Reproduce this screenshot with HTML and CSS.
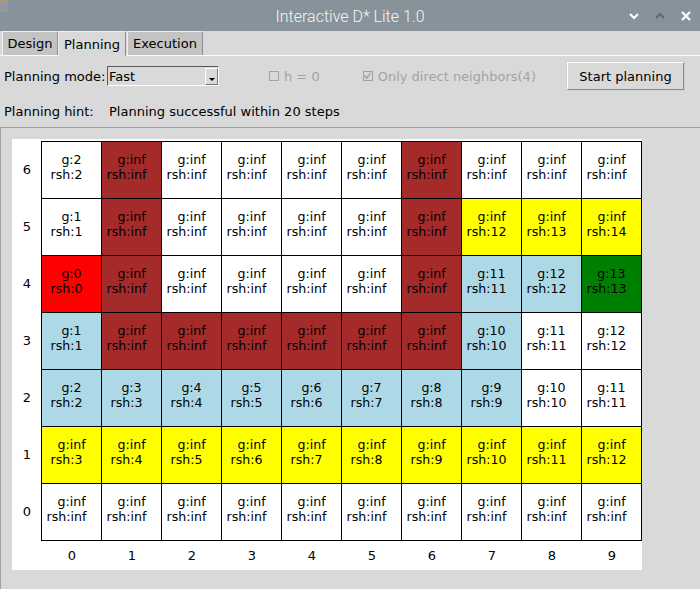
FILE: index.html
```html
<!DOCTYPE html>
<html>
<head>
<meta charset="utf-8">
<link rel="stylesheet" href="styles.css">
</head>
<body>
<div class="window">
  <div class="titlebar">
    <div class="tb-left"><span class="appicon"></span></div>
    <div class="tb-title">Interactive D* Lite 1.0</div>
    <div class="tb-right">
      <svg class="wbtn" width="12" height="8" viewBox="0 0 12 8"><path d="M2 2 L6 6 L10 2" fill="none" stroke="#ffffff" stroke-width="2.2"/></svg>
      <svg class="wbtn dim" width="12" height="8" viewBox="0 0 12 8"><path d="M2 6 L6 2 L10 6" fill="none" stroke="#5e686f" stroke-width="2.2"/></svg>
      <svg class="wbtn" width="12" height="12" viewBox="0 0 12 12"><path d="M2 2 L10 10 M10 2 L2 10" fill="none" stroke="#ffffff" stroke-width="2.4"/></svg>
    </div>
  </div>

  <div class="tabs">
    <div class="tab t-design">Design</div>
    <div class="tab t-planning active">Planning</div>
    <div class="tab t-exec">Execution</div>
  </div>

  <div class="pane">
    <div class="controls">
      <span class="label">Planning mode:</span>
      <div class="combo"><span class="combo-text">Fast</span><span class="combo-arrow"><span class="tri"></span></span></div>
      <label class="check c1"><span class="box"></span><span class="ctext">h = 0</span></label>
      <label class="check c2"><span class="box checked"><svg width="10" height="10" viewBox="0 0 10 10"><path d="M1.5 4.5 L4 7.5 L8.5 1.5" fill="none" stroke="#a3a3a3" stroke-width="1.6"/></svg></span><span class="ctext">Only direct neighbors(4)</span></label>
      <button class="btn">Start planning</button>
    </div>
    <div class="hint">
      <span class="hint-label">Planning hint:</span>
      <span class="hint-text">Planning successful within 20 steps</span>
    </div>
    <div class="frame">
      <div class="figure">
        <div class="plot">
          <div class="ylabels">
            <span>6</span><span>5</span><span>4</span><span>3</span><span>2</span><span>1</span><span>0</span>
          </div>
          <div class="grid">
            <!-- row 6 -->
            <div class="cell w"><span class="g">g:2</span><span class="r">rsh:2</span></div>
            <div class="cell b"><span class="g">g:inf</span><span class="r">rsh:inf</span></div>
            <div class="cell w"><span class="g">g:inf</span><span class="r">rsh:inf</span></div>
            <div class="cell w"><span class="g">g:inf</span><span class="r">rsh:inf</span></div>
            <div class="cell w"><span class="g">g:inf</span><span class="r">rsh:inf</span></div>
            <div class="cell w"><span class="g">g:inf</span><span class="r">rsh:inf</span></div>
            <div class="cell b"><span class="g">g:inf</span><span class="r">rsh:inf</span></div>
            <div class="cell w"><span class="g">g:inf</span><span class="r">rsh:inf</span></div>
            <div class="cell w"><span class="g">g:inf</span><span class="r">rsh:inf</span></div>
            <div class="cell w"><span class="g">g:inf</span><span class="r">rsh:inf</span></div>
            <!-- row 5 -->
            <div class="cell w"><span class="g">g:1</span><span class="r">rsh:1</span></div>
            <div class="cell b"><span class="g">g:inf</span><span class="r">rsh:inf</span></div>
            <div class="cell w"><span class="g">g:inf</span><span class="r">rsh:inf</span></div>
            <div class="cell w"><span class="g">g:inf</span><span class="r">rsh:inf</span></div>
            <div class="cell w"><span class="g">g:inf</span><span class="r">rsh:inf</span></div>
            <div class="cell w"><span class="g">g:inf</span><span class="r">rsh:inf</span></div>
            <div class="cell b"><span class="g">g:inf</span><span class="r">rsh:inf</span></div>
            <div class="cell y"><span class="g">g:inf</span><span class="r">rsh:12</span></div>
            <div class="cell y"><span class="g">g:inf</span><span class="r">rsh:13</span></div>
            <div class="cell y"><span class="g">g:inf</span><span class="r">rsh:14</span></div>
            <!-- row 4 -->
            <div class="cell red"><span class="g">g:0</span><span class="r">rsh:0</span></div>
            <div class="cell b"><span class="g">g:inf</span><span class="r">rsh:inf</span></div>
            <div class="cell w"><span class="g">g:inf</span><span class="r">rsh:inf</span></div>
            <div class="cell w"><span class="g">g:inf</span><span class="r">rsh:inf</span></div>
            <div class="cell w"><span class="g">g:inf</span><span class="r">rsh:inf</span></div>
            <div class="cell w"><span class="g">g:inf</span><span class="r">rsh:inf</span></div>
            <div class="cell b"><span class="g">g:inf</span><span class="r">rsh:inf</span></div>
            <div class="cell lb"><span class="g">g:11</span><span class="r">rsh:11</span></div>
            <div class="cell lb"><span class="g">g:12</span><span class="r">rsh:12</span></div>
            <div class="cell gr"><span class="g">g:13</span><span class="r">rsh:13</span></div>
            <!-- row 3 -->
            <div class="cell lb"><span class="g">g:1</span><span class="r">rsh:1</span></div>
            <div class="cell b"><span class="g">g:inf</span><span class="r">rsh:inf</span></div>
            <div class="cell b"><span class="g">g:inf</span><span class="r">rsh:inf</span></div>
            <div class="cell b"><span class="g">g:inf</span><span class="r">rsh:inf</span></div>
            <div class="cell b"><span class="g">g:inf</span><span class="r">rsh:inf</span></div>
            <div class="cell b"><span class="g">g:inf</span><span class="r">rsh:inf</span></div>
            <div class="cell b"><span class="g">g:inf</span><span class="r">rsh:inf</span></div>
            <div class="cell lb"><span class="g">g:10</span><span class="r">rsh:10</span></div>
            <div class="cell w"><span class="g">g:11</span><span class="r">rsh:11</span></div>
            <div class="cell w"><span class="g">g:12</span><span class="r">rsh:12</span></div>
            <!-- row 2 -->
            <div class="cell lb"><span class="g">g:2</span><span class="r">rsh:2</span></div>
            <div class="cell lb"><span class="g">g:3</span><span class="r">rsh:3</span></div>
            <div class="cell lb"><span class="g">g:4</span><span class="r">rsh:4</span></div>
            <div class="cell lb"><span class="g">g:5</span><span class="r">rsh:5</span></div>
            <div class="cell lb"><span class="g">g:6</span><span class="r">rsh:6</span></div>
            <div class="cell lb"><span class="g">g:7</span><span class="r">rsh:7</span></div>
            <div class="cell lb"><span class="g">g:8</span><span class="r">rsh:8</span></div>
            <div class="cell lb"><span class="g">g:9</span><span class="r">rsh:9</span></div>
            <div class="cell w"><span class="g">g:10</span><span class="r">rsh:10</span></div>
            <div class="cell w"><span class="g">g:11</span><span class="r">rsh:11</span></div>
            <!-- row 1 -->
            <div class="cell y"><span class="g">g:inf</span><span class="r">rsh:3</span></div>
            <div class="cell y"><span class="g">g:inf</span><span class="r">rsh:4</span></div>
            <div class="cell y"><span class="g">g:inf</span><span class="r">rsh:5</span></div>
            <div class="cell y"><span class="g">g:inf</span><span class="r">rsh:6</span></div>
            <div class="cell y"><span class="g">g:inf</span><span class="r">rsh:7</span></div>
            <div class="cell y"><span class="g">g:inf</span><span class="r">rsh:8</span></div>
            <div class="cell y"><span class="g">g:inf</span><span class="r">rsh:9</span></div>
            <div class="cell y"><span class="g">g:inf</span><span class="r">rsh:10</span></div>
            <div class="cell y"><span class="g">g:inf</span><span class="r">rsh:11</span></div>
            <div class="cell y"><span class="g">g:inf</span><span class="r">rsh:12</span></div>
            <!-- row 0 -->
            <div class="cell w"><span class="g">g:inf</span><span class="r">rsh:inf</span></div>
            <div class="cell w"><span class="g">g:inf</span><span class="r">rsh:inf</span></div>
            <div class="cell w"><span class="g">g:inf</span><span class="r">rsh:inf</span></div>
            <div class="cell w"><span class="g">g:inf</span><span class="r">rsh:inf</span></div>
            <div class="cell w"><span class="g">g:inf</span><span class="r">rsh:inf</span></div>
            <div class="cell w"><span class="g">g:inf</span><span class="r">rsh:inf</span></div>
            <div class="cell w"><span class="g">g:inf</span><span class="r">rsh:inf</span></div>
            <div class="cell w"><span class="g">g:inf</span><span class="r">rsh:inf</span></div>
            <div class="cell w"><span class="g">g:inf</span><span class="r">rsh:inf</span></div>
            <div class="cell w"><span class="g">g:inf</span><span class="r">rsh:inf</span></div>
          </div>
        </div>
        <div class="xlabels">
          <span>0</span><span>1</span><span>2</span><span>3</span><span>4</span><span>5</span><span>6</span><span>7</span><span>8</span><span>9</span>
        </div>
      </div>
    </div>
  </div>
</div>
</body>
</html>
```
FILE: styles.css
```css
* { box-sizing: border-box; }
html, body { margin: 0; padding: 0; }
body {
  width: 700px;
  height: 589px;
  overflow: hidden;
  background: #d9d9d9;
  font-family: "DejaVu Sans", sans-serif;
  font-size: 13px;
  color: #000;
}
.window { display: flex; flex-direction: column; height: 589px; }

.titlebar {
  height: 31px;
  background: #87929a;
  display: grid;
  grid-template-columns: 1fr auto 1fr;
  align-items: center;
}
.tb-left { display: flex; align-items: flex-start; height: 100%; }
.appicon {
  width: 8px; height: 12px;
  background: linear-gradient(180deg, #c89a6a 0%, #8aa0c0 50%, #c0956a 100%);
  opacity: 0.6;
}
.tb-title {
  font-family: "Roboto", sans-serif;
  font-weight: 300;
  font-size: 16px;
  color: #f5f5f5;
  padding-top: 1px;
}
.tb-right { display: flex; justify-content: flex-end; align-items: center; gap: 14px; padding-right: 8px; }
.wbtn { display: block; }

.tabs {
  height: 25px;
  display: flex;
  align-items: flex-end;
  padding-left: 2px;
  border-bottom: 1px solid #fbfbfb;
}
.tab {
  height: 24px;
  display: flex;
  align-items: center;
  justify-content: center;
  background: #c3c3c3;
  border-top: 1px solid #f0f0f0;
  border-left: 1px solid #f0f0f0;
  border-right: 1px solid #8c8c8c;
  border-top-right-radius: 3px;
}
.t-design { width: 56px; }
.t-planning { width: 68px; }
.t-exec { width: 76px; margin-left: 1px; }
.tab.active {
  background: #d9d9d9;
  height: 25px;
  margin-bottom: -1px;
}

.pane { flex: 1; display: flex; flex-direction: column; }

.controls {
  height: 40px;
  display: flex;
  align-items: center;
  padding-left: 4px;
}
.label { width: 103px; }
.combo {
  width: 112px;
  height: 20px;
  display: flex;
  align-items: center;
  border-top: 1px solid #5a5a5a;
  border-left: 1px solid #5a5a5a;
  border-right: 1px solid #ffffff;
  border-bottom: 1px solid #ffffff;
  background: #d9d9d9;
}
.combo-text { flex: 1; padding-left: 1px; }
.combo-arrow {
  width: 13px;
  height: 17px;
  margin-right: 0px;
  border-top: 1px solid #ffffff;
  border-left: 1px solid #ffffff;
  border-right: 1px solid #7a7a7a;
  border-bottom: 1px solid #7a7a7a;
  display: flex;
  align-items: flex-end;
  justify-content: center;
  padding-bottom: 3px;
}
.tri {
  width: 0; height: 0;
  border-left: 3.5px solid transparent;
  border-right: 3.5px solid transparent;
  border-top: 3px solid #000;
}
.check { display: flex; align-items: center; color: #a3a3a3; }
.c1 { margin-left: 50px; }
.c2 { margin-left: 43px; }
.box {
  width: 10px; height: 10px;
  border: 1px solid #a3a3a3;
  margin-right: 5px;
  display: flex;
}
.box svg { display: block; margin: -1px 0 0 -1px; }
.btn {
  margin-left: auto;
  margin-right: 16px;
  width: 117px;
  height: 28px;
  font-family: "DejaVu Sans", sans-serif;
  font-size: 13px;
  color: #000;
  background: #d9d9d9;
  border-top: 1px solid #ffffff;
  border-left: 1px solid #ffffff;
  border-right: 1px solid #8a8a8a;
  border-bottom: 1px solid #8a8a8a;
  outline: 1px solid #d0d0d0;
  padding: 0;
}

.hint {
  height: 31px;
  display: flex;
  align-items: center;
  padding-left: 4px;
}
.hint-label { width: 105px; }

.frame {
  flex: 1;
  border-top: 1px solid #a0a0a0;
  border-left: 1px solid #a0a0a0;
  padding: 11px 0 0 11px;
}
.figure {
  width: 630px;
  height: 431px;
  background: #ffffff;
  padding-top: 2px;
}
.plot { display: flex; }
.ylabels {
  width: 29px;
  display: grid;
  grid-template-rows: repeat(7, 57px);
  padding-top: 1px;
}
.ylabels span { display: flex; align-items: center; justify-content: center; padding-bottom: 2px; padding-left: 1px; }
.grid {
  display: grid;
  grid-template-columns: repeat(10, 59px);
  grid-template-rows: repeat(7, 56px);
  gap: 1px;
  padding: 1px;
  background: #000;
  width: 601px;
}
.cell {
  display: flex;
  flex-direction: column;
  align-items: center;
  justify-content: center;
  font-size: 12.6px;
  line-height: 14.6px;
  padding-bottom: 4px;
  white-space: nowrap;
}
.cell .g { display: block; }
.cell .r { display: block; padding-right: 10px; }
.w { background: #ffffff; }
.b { background: #a52a2a; }
.y { background: #ffff00; }
.lb { background: #add8e6; }
.red { background: #ff0000; }
.gr { background: #008000; }

.xlabels {
  margin-left: 30px;
  display: grid;
  grid-template-columns: repeat(10, 60px);
  height: 27px;
  align-items: center;
}
.xlabels span { text-align: center; padding-top: 1px; }
```
